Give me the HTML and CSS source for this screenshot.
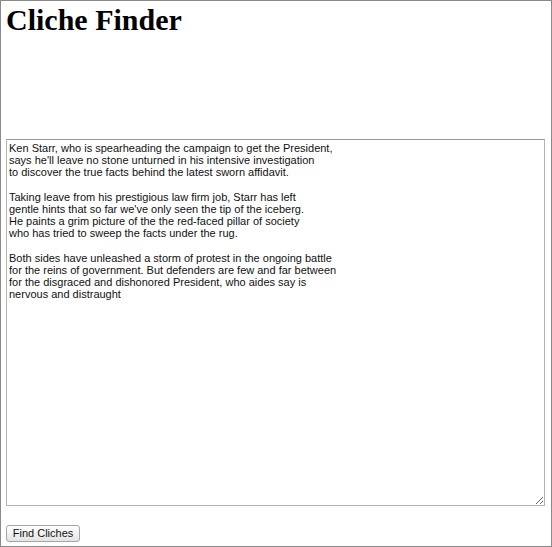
FILE: index.html
```html
<!DOCTYPE html>
<html lang="en">
<head>
  <meta charset="UTF-8">
  <title>Cliche Finder</title>
  <link rel="stylesheet" href="styles.css">
</head>
<body>
<div class="page">
  <h1>Cliche Finder</h1>
  <form class="finder">
    <!--text to check-->
    <textarea class="source">Ken Starr, who is spearheading the campaign to get the President,
says he'll leave no stone unturned in his intensive investigation
to discover the true facts behind the latest sworn affidavit.

Taking leave from his prestigious law firm job, Starr has left
gentle hints that so far we've only seen the tip of the iceberg.
He paints a grim picture of the the red-faced pillar of society
who has tried to sweep the facts under the rug.

Both sides have unleashed a storm of protest in the ongoing battle
for the reins of government. But defenders are few and far between
for the disgraced and dishonored President, who aides say is
nervous and distraught</textarea>
    <!--submit-->
    <button type="button" class="findBtn">Find Cliches</button>
  </form>
</div>
</body>
</html>
```

FILE: styles.css
```css
* {
  margin: 0;
  padding: 0;
  box-sizing: border-box;
}

body {
  background: #ffffff;
}

.page {
  width: 552px;
  height: 547px;
  border: 1px solid #8a8a8a;
  padding: 0 5px;
  overflow: hidden;
}

h1 {
  font-family: "Liberation Serif", "Times New Roman", serif;
  font-size: 30px;
  font-weight: bold;
  line-height: 36px;
  color: #000000;
  margin-top: 1px;
}

.finder {
  display: flex;
  flex-direction: column;
  align-items: flex-start;
  margin-top: 101px;
}

.finder .source {
  width: 539px;
  height: 367px;
  padding: 2px;
  border: 1px solid #b4b4b4;
  border-top-color: #9a9a9a;
  font-family: "Liberation Sans", Arial, sans-serif;
  font-size: 11px;
  line-height: 12.2px;
  color: #111111;
  background: #ffffff;
  outline: none;
}

.finder .findBtn {
  margin-top: 19px;
  width: 74px;
  height: 17px;
  border: 1px solid #a6a6a6;
  border-radius: 3px;
  background: linear-gradient(#ffffff, #e4e4e4);
  font-family: "Liberation Sans", Arial, sans-serif;
  font-size: 11px;
  line-height: 15px;
  color: #111111;
}
```
